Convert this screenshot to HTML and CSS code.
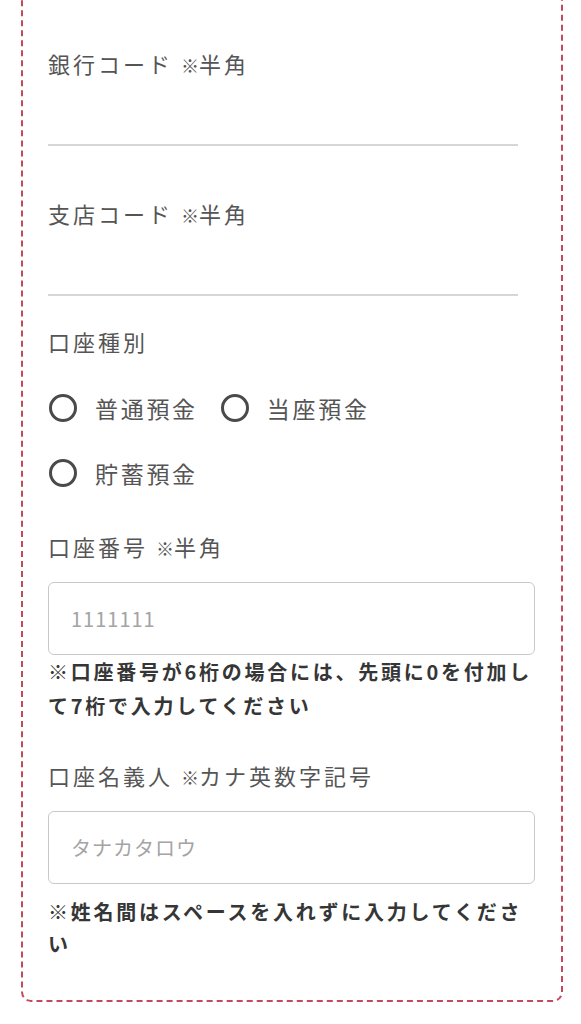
FILE: index.html
```html
<!DOCTYPE html>
<html lang="ja">
<head>
<meta charset="utf-8">
<title>口座情報</title>
<link rel="stylesheet" href="styles.css">
</head>
<body>
<div class="card">
  <div class="field field-first">
    <label class="label">銀行コード <span class="note-mark">※</span>半角</label>
    <input class="line-input" type="text">
  </div>
  <div class="field field-second">
    <label class="label">支店コード <span class="note-mark">※</span>半角</label>
    <input class="line-input" type="text">
  </div>
  <div class="field field-radio">
    <div class="label">口座種別</div>
    <div class="options">
      <label class="option"><span class="circle"></span><span class="option-text">普通預金</span></label>
      <label class="option"><span class="circle"></span><span class="option-text">当座預金</span></label>
      <label class="option"><span class="circle"></span><span class="option-text">貯蓄預金</span></label>
    </div>
  </div>
  <div class="field field-number">
    <label class="label">口座番号 <span class="note-mark">※</span>半角</label>
    <input class="box-input" type="text" placeholder="1111111">
    <p class="hint">※口座番号が6桁の場合には、先頭に0を付加して7桁で入力してください</p>
  </div>
  <div class="field field-name">
    <label class="label">口座名義人 <span class="note-mark">※</span>カナ英数字記号</label>
    <input class="box-input" type="text" placeholder="タナカタロウ">
    <p class="hint hint-spaced">※姓名間はスペースを入れずに入力してください</p>
  </div>
</div>
</body>
</html>
```
FILE: styles.css
```css
* { box-sizing: border-box; }
html, body {
  margin: 0;
  padding: 0;
  background: #ffffff;
}
body {
  font-family: "Noto Sans CJK JP", "Noto Sans", sans-serif;
  color: #555555;
  overflow: hidden;
}
.card {
  margin: -40px 18px 0 21px;
  border: 2px dashed #c4495c;
  border-radius: 10px;
  padding: 89px 26px 40px 25px;
}
.field {
  display: flex;
  flex-direction: column;
  align-items: flex-start;
}
.field-first { margin-bottom: 55px; }
.field-second { margin-bottom: 33px; }
.field-radio { margin-bottom: 39px; }
.field-number { margin-bottom: 40px; }
.label {
  display: block;
  font-size: 22px;
  line-height: 24px;
  height: 30px;
  letter-spacing: 3px;
  color: #555555;
  white-space: nowrap;
}
.note-mark {
  font-size: 18px;
  letter-spacing: 0;
}
.line-input {
  width: 470px;
  height: 65px;
  border: none;
  border-bottom: 2px solid #d6d6d6;
  outline: none;
  padding: 0;
  font-size: 20px;
  background: transparent;
}
.options {
  margin-top: 27px;
  display: flex;
  flex-wrap: wrap;
  column-gap: 22px;
  row-gap: 21px;
  max-width: 400px;
}
.option {
  display: flex;
  align-items: center;
  height: 44px;
  gap: 18px;
}
.circle {
  width: 28px;
  height: 28px;
  border: 3px solid #4a4a4a;
  border-radius: 50%;
  margin-left: 1px;
}
.option-text {
  font-size: 23px;
  line-height: 38px;
  letter-spacing: 2.7px;
  color: #555555;
}
.box-input {
  margin-top: 18px;
  width: 487px;
  height: 73px;
  border: 1.5px solid #c9c9c9;
  border-radius: 6px;
  padding: 0 0 0 22px;
  font-family: "Noto Sans CJK JP", "Noto Sans", sans-serif;
  font-size: 20px;
  letter-spacing: 1px;
  color: #333333;
  outline: none;
  background: #ffffff;
}
.box-input::placeholder {
  color: #a4a4a4;
}
.hint {
  margin: 0;
  font-size: 20px;
  font-weight: 700;
  line-height: 34px;
  letter-spacing: 2.75px;
  color: #363636;
  width: 487px;
}
.hint-spaced {
  margin-top: 12px;
  line-height: 32px;
}
```
